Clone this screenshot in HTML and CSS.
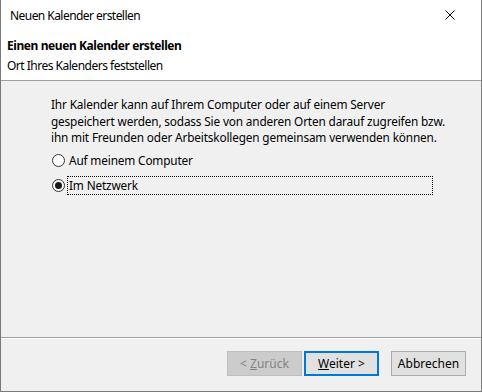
FILE: index.html
```html
<!DOCTYPE html>
<html lang="de">
<head>
    <meta charset="UTF-8">
    <title>Neuen Kalender erstellen</title>
    <link rel="stylesheet" href="styles.css">
</head>
<body>
    <div class="window">
        <div class="titlebar">
            <span class="title">Neuen Kalender erstellen</span>
            <button class="close-button" aria-label="Schließen">
                <svg width="10" height="10" viewBox="0 0 10 10">
                    <path d="M0.5 0.5 L9.5 9.5 M9.5 0.5 L0.5 9.5" stroke="#000" stroke-width="1" fill="none"/>
                </svg>
            </button>
        </div>
        <div class="header">
            <div class="header-title">Einen neuen Kalender erstellen</div>
            <div class="header-subtitle">Ort Ihres Kalenders feststellen</div>
        </div>
        <div class="content">
            <p class="description">
                Ihr Kalender kann auf Ihrem Computer oder auf einem Server<br>
                gespeichert werden, sodass Sie von anderen Orten darauf zugreifen bzw.<br>
                ihn mit Freunden oder Arbeitskollegen gemeinsam verwenden können.
            </p>
            <label class="radio">
                <span class="radio-circle"></span>
                <span class="radio-label">Auf meinem Computer</span>
            </label>
            <label class="radio radio-checked">
                <span class="radio-circle"></span>
                <span class="radio-label focused">Im Netzwerk</span>
            </label>
        </div>
        <div class="footer">
            <button class="btn" disabled>&lt; <u>Z</u>urück</button>
            <button class="btn btn-default"><u>W</u>eiter &gt;</button>
            <button class="btn btn-cancel">Abbrechen</button>
        </div>
    </div>
</body>
</html>
```

FILE: styles.css
```css
body {
    margin: 0;
    font-family: "Noto Sans", "Open Sans", sans-serif;
    font-size: 11.8px;
    color: #000;
    background: #f0f0f0;
}
.window {
    width: 482px;
    height: 392px;
    box-sizing: border-box;
    border: 1px solid #7a7a7a;
    border-top: none;
    display: flex;
    flex-direction: column;
    background: #f0f0f0;
}
.titlebar {
    height: 30px;
    background: #fff;
    display: flex;
    align-items: center;
    justify-content: space-between;
    padding-left: 9px;
}
.title {
    margin-top: 1px;
    font-size: 12px;
    letter-spacing: -0.55px;
}
.close-button {
    width: 46px;
    height: 30px;
    border: none;
    background: none;
    padding: 0;
    display: flex;
    align-items: center;
    justify-content: center;
    margin-right: 8px;
}
.header {
    height: 51px;
    box-sizing: border-box;
    background: #fff;
    border-bottom: 1px solid #a0a0a0;
    padding: 8px 6px 0;
    font-size: 12px;
}
.header-title {
    font-weight: bold;
    line-height: 16px;
    letter-spacing: -0.42px;
}
.header-subtitle {
    line-height: 16px;
    margin-top: 4px;
    letter-spacing: -0.5px;
}
.content {
    flex: 1;
    padding: 15px 0 0 50px;
    border-bottom: 1px solid #a0a0a0;
    box-shadow: 0 1px 0 #fff;
    letter-spacing: -0.15px;
}
.description {
    margin: 0 0 4px;
    line-height: 16.5px;
}
.radio {
    display: flex;
    align-items: center;
    height: 21px;
    margin-bottom: 4px;
}
.radio-circle {
    width: 13px;
    height: 13px;
    box-sizing: border-box;
    border: 1px solid #333;
    border-radius: 50%;
    background: #fff;
    margin-left: 1px;
    margin-right: 2px;
    position: relative;
}
.radio-checked .radio-circle::after {
    content: '';
    position: absolute;
    left: 2px;
    top: 2px;
    width: 7px;
    height: 7px;
    border-radius: 50%;
    background: #1a1a1a;
}
.radio-label {
    padding: 1px 2px;
    line-height: 17px;
}
.radio-label.focused {
    width: 362px;
    border: 1px dotted #000;
    padding: 0 1px;
}
.footer {
    height: 52px;
    margin-top: 1px;
    display: flex;
    align-items: flex-start;
    justify-content: flex-end;
    padding: 12px 15px 0 0;
    box-sizing: border-box;
}
.btn {
    width: 75px;
    height: 25px;
    font-family: inherit;
    font-size: 12px;
    background: #e1e1e1;
    border: 1px solid #adadad;
    color: #000;
    padding: 0;
    margin-left: 2px;
}
.btn:disabled {
    background: #cccccc;
    border-color: #bfbfbf;
    color: #838383;
}
.btn-default {
    border: 2px solid #0078d7;
}
.btn-cancel {
    margin-left: 12px;
}
```
